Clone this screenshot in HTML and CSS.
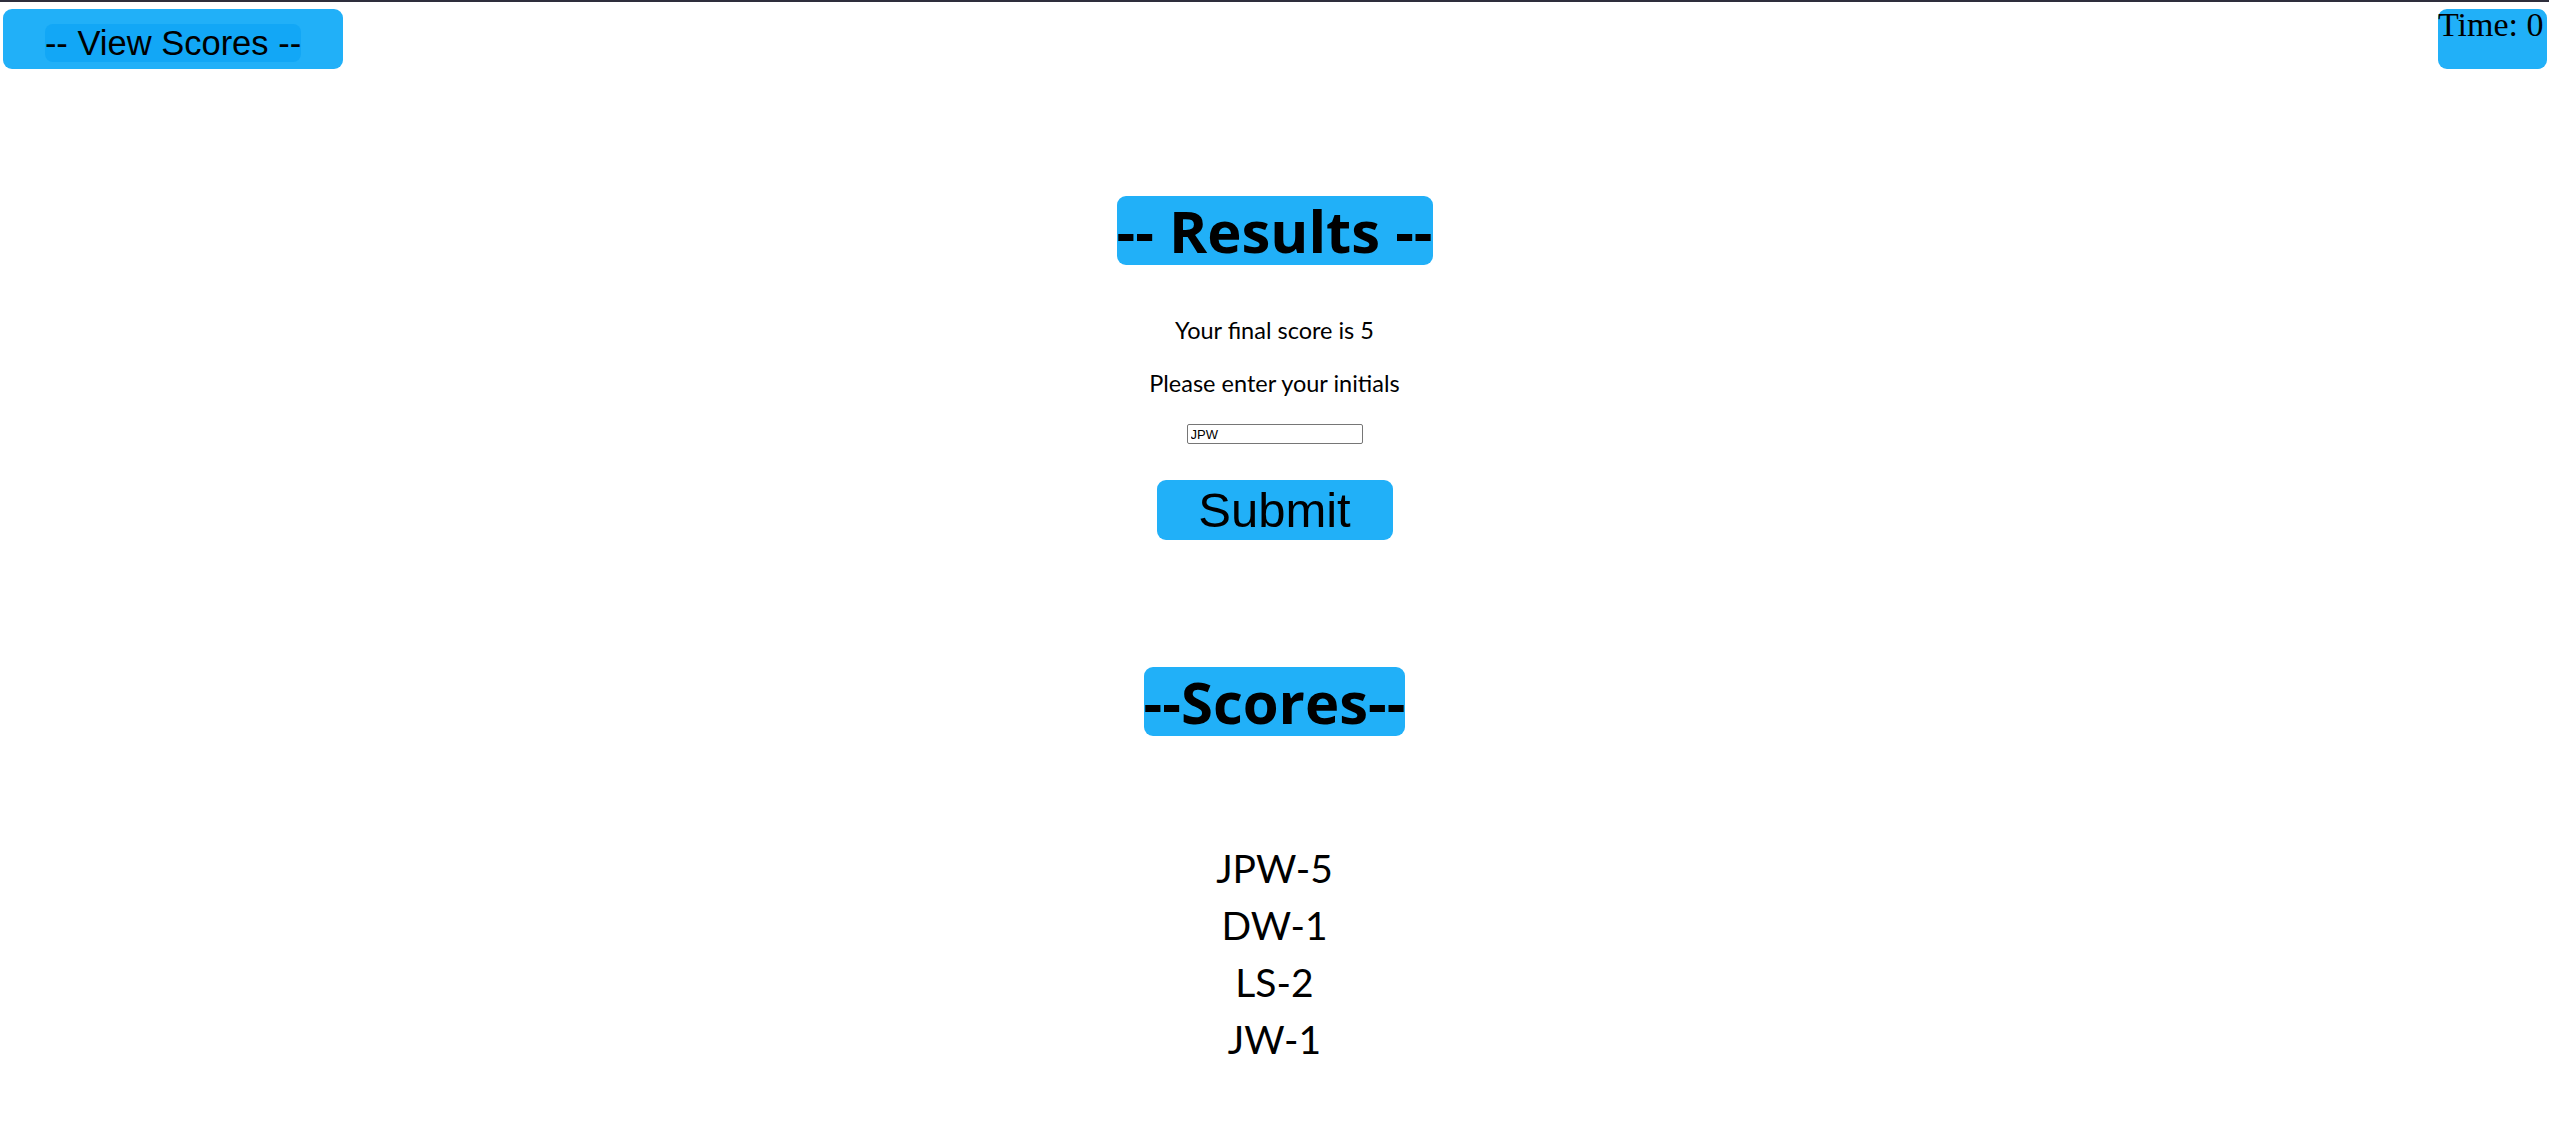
FILE: index.html
```html
<!DOCTYPE html>
<html lang="en">
<head>
<meta charset="utf-8">
<title>Quiz Results</title>
<link rel="stylesheet" href="styles.css">
</head>
<body>
<header class="topbar">
  <button class="view-btn"><span class="view-label">-- View Scores --</span></button>
  <div class="timer">Time: 0</div>
</header>
<main class="results">
  <h1 class="heading">-- Results --</h1>
  <p class="line first">Your final score is 5</p>
  <p class="line second">Please enter your initials</p>
  <input class="initials" type="text" value="JPW">
  <div class="submit-row"><button class="submit">Submit</button></div>
</main>
<section class="scores">
  <h1 class="heading">--Scores--</h1>
  <ul class="score-list">
    <li>JPW-5</li>
    <li>DW-1</li>
    <li>LS-2</li>
    <li>JW-1</li>
  </ul>
</section>
</body>
</html>
```
FILE: styles.css
```css
html, body {
  margin: 0;
  padding: 0;
  background: #ffffff;
}
body {
  border-top: 2px solid #2e2e3c;
  font-family: Lato, "Open Sans", sans-serif;
  color: #000;
}
.topbar {
  display: flex;
  justify-content: space-between;
  align-items: flex-start;
  padding: 7px 2px 0 3px;
}
.view-btn {
  width: 340px;
  height: 60px;
  border: none;
  border-radius: 9px;
  background: #21b0f8;
  padding: 15px 40px 7px;
  margin: 0;
  display: flex;
  justify-content: center;
  align-items: flex-start;
  cursor: pointer;
}
.view-label {
  display: block;
  background: #12a7f6;
  border-radius: 8px;
  font-family: "Liberation Sans", Arial, sans-serif;
  font-size: 34.5px;
  line-height: 38px;
  color: #000;
  white-space: nowrap;
}
.timer {
  width: 109px;
  height: 60px;
  background: #21b0f8;
  border-radius: 9px;
  font-family: "Liberation Serif", "Times New Roman", serif;
  font-size: 34px;
  line-height: 32px;
  white-space: nowrap;
  overflow: visible;
}
.results, .scores {
  text-align: center;
}
.heading {
  display: inline-block;
  margin: 127px 0 0;
  background: #21b0f8;
  border-radius: 9px;
  font-family: "Open Sans", sans-serif;
  font-weight: 700;
  font-size: 58px;
  line-height: 69px;
  height: 69px;
  white-space: nowrap;
}
.line {
  margin: 0;
  font-size: 23.5px;
  line-height: 30px;
}
.line.first {
  margin-top: 50px;
}
.line.second {
  margin-top: 23px;
}
.initials {
  display: inline-block;
  box-sizing: border-box;
  width: 176px;
  height: 20px;
  margin-top: 26px;
  padding: 1px 3px;
  border: 1px solid #767676;
  border-radius: 2px;
  font-family: "Liberation Sans", Arial, sans-serif;
  font-size: 13px;
  vertical-align: top;
}
.submit-row {
  margin-top: 36px;
}
.submit {
  width: 236px;
  height: 60px;
  border: none;
  border-radius: 9px;
  background: #21b0f8;
  font-family: "Liberation Sans", Arial, sans-serif;
  font-size: 49px;
  line-height: 55px;
  padding: 0;
  color: #000;
  cursor: pointer;
}
.scores .heading {
  margin-top: 127px;
}
.score-list {
  list-style: none;
  margin: 104px 0 0;
  padding: 0;
  font-size: 39px;
  line-height: 57px;
}
```
